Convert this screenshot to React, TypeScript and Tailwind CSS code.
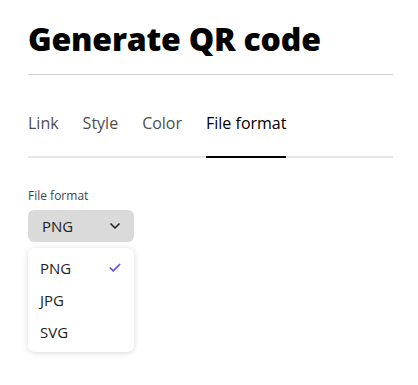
import { Check, ChevronDown } from "lucide-react";

const TABS = ["Link", "Style", "Color", "File format"];
const FORMATS = ["PNG", "JPG", "SVG"];

export default function App() {
  const active = "File format";
  const selected = "PNG";

  return (
    <div className="min-h-[385px] w-[418px] bg-white px-7 pt-[19px] font-['Open_Sans',sans-serif] text-[#222]">
      <h1 className="text-[32px] leading-[40px] font-extrabold tracking-[-0.2px] text-black">Generate QR code</h1>
      <div className="mt-[15px] h-px w-[365px] bg-[#d5d5d5]" />

      <div className="mt-[36px] flex w-[365px] gap-[24px] border-b-2 border-[#e6e6e6]">
        {TABS.map((tab) => (
          <button
            key={tab}
            className={`-mb-[2px] border-b-2 pb-[21px] text-[16px] leading-[24px] ${
              tab === active ? "border-black text-black" : "border-transparent text-[#4e4e4e]"
            }`}
          >
            {tab}
          </button>
        ))}
      </div>

      <p className="mt-[30px] text-[12px] leading-[16px] text-[#444]">File format</p>
      <button className="mt-[6px] flex h-[32px] w-[106px] items-center justify-between rounded-[6px] bg-[#dadada] pr-[11px] pl-[14px] text-[15px] text-[#222]">
        <span>PNG</span>
        <ChevronDown size={16} strokeWidth={2.5} />
      </button>

      <ul className="mt-[6px] w-[106px] rounded-[7px] bg-white py-[4px] shadow-[0_1px_6px_rgba(0,0,0,0.15)]">
        {FORMATS.map((f) => (
          <li key={f} className="flex h-[32px] items-center justify-between pr-[12px] pl-[12px] text-[15px] text-[#222]">
            <span>{f}</span>
            {f === selected && <Check size={14} strokeWidth={3} className="text-[#6b4cf5]" />}
          </li>
        ))}
      </ul>
    </div>
  );
}
